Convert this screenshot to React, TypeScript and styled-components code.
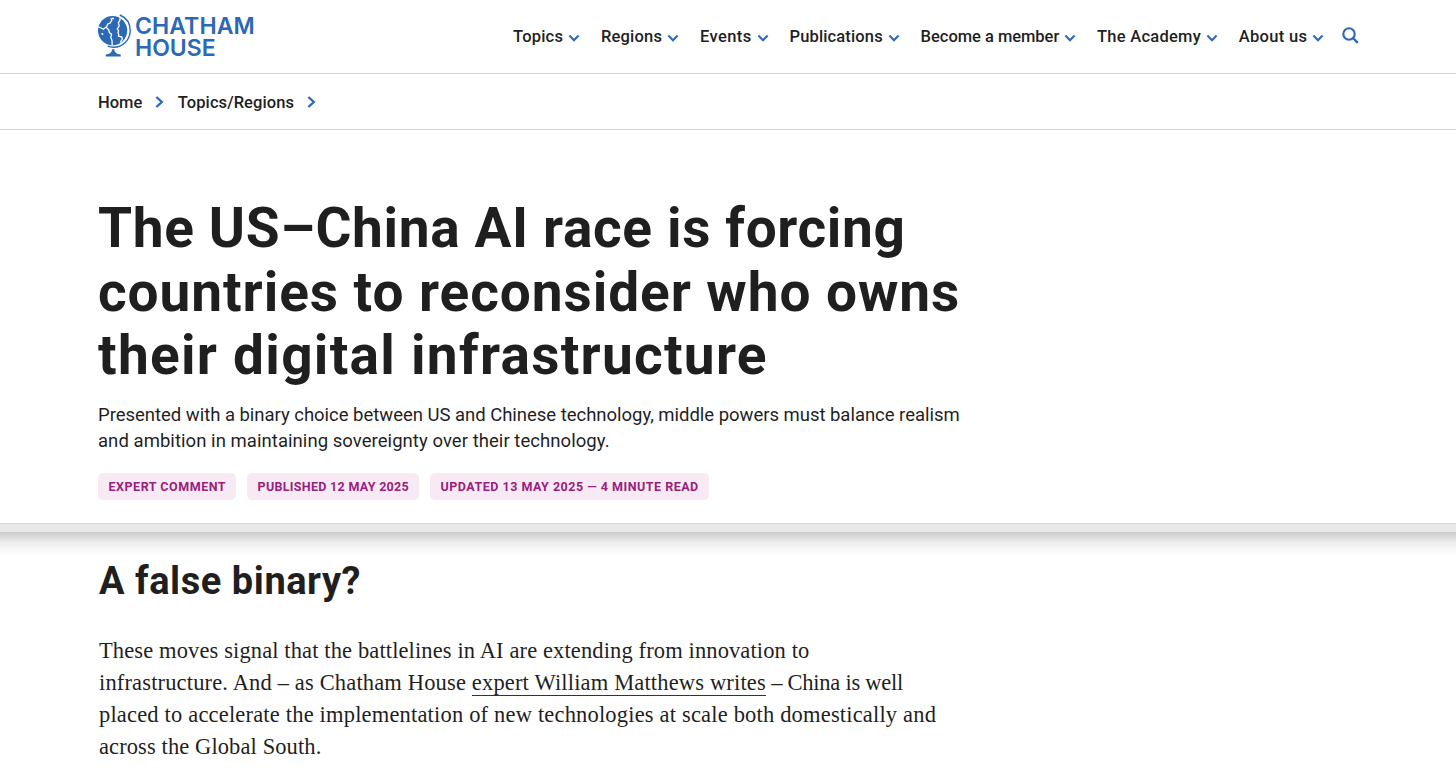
import React from 'react'
import styled, { createGlobalStyle } from 'styled-components'

const blue = '#2b68b5'
const ink = '#1f1f1f'

const menu = [
	{ label: 'Topics', tracking: 0.2 },
	{ label: 'Regions', tracking: 0.2 },
	{ label: 'Events', tracking: 0.42 },
	{ label: 'Publications', tracking: 0.14 },
	{ label: 'Become a member', tracking: -0.03 },
	{ label: 'The Academy', tracking: 0.25 },
	{ label: 'About us', tracking: 0.3 }
]

const breadcrumb = [
	{ label: 'Home', tracking: 0 },
	{ label: 'Topics/Regions', tracking: 0.08 }
]

const title = [
	{ text: 'The US–China AI race is forcing', tracking: 0.63 },
	{ text: 'countries to reconsider who owns', tracking: 0.93 },
	{ text: 'their digital infrastructure', tracking: 1.27 }
]

const summary = [
	{
		text:
			'Presented with a binary choice between US and Chinese technology, middle powers must balance realism',
		tracking: -0.025
	},
	{
		text: 'and ambition in maintaining sovereignty over their technology.',
		tracking: 0.055
	}
]

const tags = [
	{ label: 'Expert comment', tracking: 0.52 },
	{ label: 'Published 12 May 2025', tracking: 0.3 },
	{ label: 'Updated 13 May 2025 — 4 minute read', tracking: 0.5 }
]

export default function App() {
	return (
		<>
			<GlobalStyle />
			<Header>
				<Logo href="#" aria-label="Chatham House">
					<Globe />
					<Wordmark>
						<Line $tracking={0.1}>CHATHAM</Line>
						<Line $tracking={0}>HOUSE</Line>
					</Wordmark>
				</Logo>
				<Nav>
					{menu.map(({ label, tracking }) => (
						<NavLink href="#" key={label} $tracking={tracking}>
							{label}
							<ChevronDown />
						</NavLink>
					))}
					<SearchButton aria-label="Search">
						<SearchIcon />
					</SearchButton>
				</Nav>
			</Header>
			<Breadcrumb>
				{breadcrumb.map(({ label, tracking }) => (
					<Crumb href="#" key={label} $tracking={tracking}>
						{label}
						<ChevronRight />
					</Crumb>
				))}
			</Breadcrumb>
			<Hero>
				<Title>
					{title.map(({ text, tracking }) => (
						<Line key={text} $tracking={tracking}>
							{text}
						</Line>
					))}
				</Title>
				<Summary>
					{summary.map(({ text, tracking }) => (
						<Line key={text} $tracking={tracking}>
							{text}
						</Line>
					))}
				</Summary>
				<Tags>
					{tags.map(({ label, tracking }) => (
						<Tag key={label} $tracking={tracking}>
							{label}
						</Tag>
					))}
				</Tags>
			</Hero>
			<Divider />
			<Article>
				<Subtitle>A false binary?</Subtitle>
				<Paragraph>
					<Line $tracking={0.12}>
						These moves signal that the battlelines in AI are extending from
						innovation to
					</Line>
					<Line $tracking={0.155}>
						infrastructure. And – as Chatham House{' '}
						<TextLink href="#">expert William Matthews writes</TextLink>
						<Tight> – China is well</Tight>
					</Line>
					<Line $tracking={0.18}>
						placed to accelerate the implementation of new technologies at scale
						both domestically and
					</Line>
					<Line $tracking={0.1}>across the Global South.</Line>
				</Paragraph>
			</Article>
		</>
	)
}

function Globe() {
	return (
		<GlobeSvg viewBox="0 0 33 44">
			<circle cx="14.6" cy="16.6" r="14.6" fill={blue} />
			<path
				d="M21.8 1C28.600 3.800 32.300 9.800 32.200 17c-.2 9-7.400 16-16.600 16.200-2.200 0-4.200-.3-6-1"
				fill="none"
				stroke={blue}
				strokeWidth="1.400"
			/>
			<g fill="none" stroke="#fff" strokeWidth="1.300" strokeLinejoin="round">
				<path d="M0 12.800l3.200 1.200 2 1.300 3-2.200 2.600 2.900.6 2.600 2.200 1.600-.8 3.200 1.200 3.200.2 4.600" />
				<path d="M8.400 13.200l1.200-3 2.800-1.400 1.400-2.600-1-2.200" />
				<path d="M22.400 3.200l-.6 3.200-1.400 2.400.8 3-2 3.200 1.400 1.400-.6 2.400.8 1.600-.4 1.800 3.400.8.6 2.200-2.200 3.200" />
			</g>
			<circle cx="15" cy="4.600" r="1" fill="#fff" />
			<circle cx="4.400" cy="20" r="1" fill="#fff" />
			<path
				d="M14.100 35.200h2.200c0 3.100 2.200 4.600 6.400 5.400v1.900H7.700v-1.900c4.200-.8 6.400-2.300 6.400-5.400z"
				fill={blue}
			/>
		</GlobeSvg>
	)
}

function ChevronDown() {
	return (
		<DownSvg viewBox="0 0 12 8">
			<path
				d="M1.400 1.500L6 6.200l4.600-4.700"
				fill="none"
				stroke={blue}
				strokeWidth="2"
			/>
		</DownSvg>
	)
}

function ChevronRight() {
	return (
		<RightSvg viewBox="0 0 9 12">
			<path
				d="M1.400 1l5.400 5-5.400 5"
				fill="none"
				stroke={blue}
				strokeWidth="2.300"
			/>
		</RightSvg>
	)
}

function SearchIcon() {
	return (
		<svg width="17" height="17" viewBox="0 0 17 17">
			<circle
				cx="7"
				cy="7"
				r="5.700"
				fill="none"
				stroke={blue}
				strokeWidth="2.100"
			/>
			<path d="M11 11l4.800 4.800" stroke={blue} strokeWidth="2.400" />
		</svg>
	)
}

const GlobalStyle = createGlobalStyle`
	* {
		box-sizing: border-box;
	}

	body {
		margin: 0;
		background: #fff;
		color: ${ink};
		font-family: Roboto, sans-serif;
		overflow: hidden;
	}

	a {
		color: inherit;
		text-decoration: none;
	}
`

const Line = styled.span<{ $tracking: number }>`
	display: block;
	white-space: nowrap;
	letter-spacing: ${({ $tracking }) => $tracking}px;
`

const Header = styled.header`
	display: flex;
	align-items: flex-start;
	justify-content: space-between;
	height: 74px;
	padding: 0 98px;
	border-bottom: 1px solid #d6d6d6;
`

const Logo = styled.a`
	display: flex;
	gap: 4px;
	padding-top: 14px;
`

const GlobeSvg = styled.svg`
	width: 33px;
	height: 44px;
`

const Wordmark = styled.span`
	color: ${blue};
	font: 600 23px / 22px Inter, sans-serif;
	padding-top: 1px;
`

const Nav = styled.nav`
	display: flex;
	align-items: center;
	gap: 20.8px;
	height: 73px;
`

const NavLink = styled.a<{ $tracking: number }>`
	display: flex;
	align-items: center;
	gap: 5px;
	font-size: 16.5px;
	font-weight: 500;
	line-height: 20px;
	letter-spacing: ${({ $tracking }) => $tracking}px;
	white-space: nowrap;
`

const DownSvg = styled.svg`
	width: 12px;
	height: 8px;
	margin-top: 3px;
`

const SearchButton = styled.button`
	display: flex;
	padding: 0;
	margin: -3px -1px 0 -3px;
	border: 0;
	background: none;
`

const Breadcrumb = styled.nav`
	display: flex;
	align-items: center;
	gap: 13.5px;
	height: 56px;
	padding: 2px 98px 0;
	border-bottom: 1px solid #d6d6d6;
`

const Crumb = styled.a<{ $tracking: number }>`
	display: flex;
	align-items: center;
	gap: 13px;
	font-size: 16.5px;
	font-weight: 500;
	line-height: 20px;
	letter-spacing: ${({ $tracking }) => $tracking}px;
`

const RightSvg = styled.svg`
	width: 9px;
	height: 12px;
	margin-top: -2px;
`

const Hero = styled.section`
	height: 393px;
	padding: 67px 98px 0;
`

const Title = styled.h1`
	margin: 0;
	font-size: 55px;
	font-weight: 700;
	line-height: 63.7px;
`

const Summary = styled.p`
	margin: 14.9px 0 0;
	font-size: 18.5px;
	line-height: 25.6px;
`

const Tags = styled.div`
	display: flex;
	gap: 11px;
	margin-top: 19px;
`

const Tag = styled.span<{ $tracking: number }>`
	padding: 0 10px 0 10.5px;
	border-radius: 5px;
	background: #f8eaf4;
	color: #98217c;
	font-size: 12.5px;
	font-weight: 700;
	line-height: 27px;
	text-transform: uppercase;
	letter-spacing: ${({ $tracking }) => $tracking}px;
`

const Divider = styled.div`
	height: 34px;
	border-top: 1px solid #d9d9d9;
	background: linear-gradient(
		#e8e8e8 8px,
		#c9c9c9 8px,
		#d9d9d9 12px,
		#ebebeb 18px,
		#f8f8f8 25px,
		#fff 32px
	);
`

const Article = styled.article`
	padding: 0 99px;
`

const Subtitle = styled.h2`
	margin: 0;
	font-size: 38px;
	line-height: 48px;
	letter-spacing: 0.55px;
`

const Paragraph = styled.p`
	margin: 30px 0 0;
	font: 22.5px / 32px 'Liberation Serif', serif;
`

const TextLink = styled.a`
	border-bottom: 1px solid #333;
	letter-spacing: 0.16px;
`

const Tight = styled.span`
	letter-spacing: -0.26px;
`
